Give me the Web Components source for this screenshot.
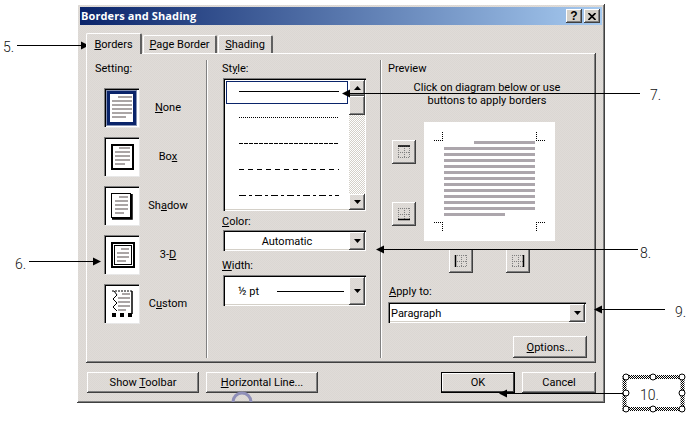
<!DOCTYPE html>
<html>
<head>
<meta charset="utf-8">
<title>Borders and Shading</title>
<style>
  html, body { margin: 0; height: 100%; background: #fff; overflow: hidden; }
  body { font: 11px/13px Roboto, "Liberation Sans", Arial, sans-serif; color: #000; }
  u { text-underline-offset: 1px; }
</style>
</head>
<body>
<script>
const DITHER = "repeating-conic-gradient(#dbd7d3 0 25%, #e0dcd8 0 50%) 0 0/2px 2px";
const RAISED = "inset -1px -1px 0 #404040, inset 1px 1px 0 #fff, inset -2px -2px 0 #808080";
const SUNKEN = "inset 1px 1px 0 #808080, inset 2px 2px 0 #000, inset -1px -1px 0 #fff, inset -2px -2px 0 #d4d0c8";

class BaseElement extends HTMLElement {
  constructor() {
    super();
    this.attachShadow({ mode: "open" });
  }
  connectedCallback() {
    this.render();
  }
}

class WinDialog extends BaseElement {
  render() {
    this.shadowRoot.innerHTML = `
      <style>
        :host {
          display: block; box-sizing: border-box; width: 528px; height: 399px;
          margin: 4px 0 0 77px; padding: 3px; background: ${DITHER};
          box-shadow: ${RAISED};
        }
        .title {
          display: flex; align-items: center; justify-content: space-between; height: 18px;
          padding: 0 2px 0 1px; background: linear-gradient(90deg, #0a246a, #a6caf0);
          color: #fff; font: bold 11px/13px "Open Sans", sans-serif; letter-spacing: 0.1px;
        }
        .title > span:first-child { margin-top: -2px; }
        .caption-buttons { display: flex; gap: 2px; }
        .tabs { display: flex; align-items: flex-end; height: 21px; margin: 7px 0 0 6px; position: relative; z-index: 1; }
        .footer { display: flex; width: 509px; margin: 9px 0 0 7px; gap: 7px; }
        .spacer { flex: 1; }
      </style>
      <div class="title">
        <span>Borders and Shading</span>
        <span class="caption-buttons"><slot name="caption"></slot></span>
      </div>
      <div class="tabs"><slot name="tab"></slot></div>
      <slot name="panel"></slot>
      <div class="footer">
        <slot name="footer-left"></slot>
        <span class="spacer"></span>
        <slot name="footer-right"></slot>
      </div>
    `;
  }
}

class CaptionButton extends BaseElement {
  render() {
    this.shadowRoot.innerHTML = `
      <style>
        :host {
          display: flex; align-items: center; justify-content: center; width: 16px; height: 14px;
          background: #d4d0c8; box-shadow: ${RAISED}; color: #000; font: bold 12px/14px "Liberation Sans", sans-serif;
          letter-spacing: 0;
        }
      </style>
      <slot></slot>
    `;
  }
}

class WinTab extends BaseElement {
  render() {
    const active = this.hasAttribute("active");
    this.shadowRoot.innerHTML = `
      <style>
        :host {
          display: flex; align-items: center; justify-content: center; box-sizing: border-box;
          width: ${this.getAttribute("width")}px; height: ${active ? 21 : 18}px;
          margin-right: 1px; background: ${DITHER}; border-radius: 2px 2px 0 0;
          ${active ? "margin-bottom: -1px;" : ""}
          border-top: 1px solid #fff; border-left: 1px solid #fff;
          border-right: 2px solid #606060;
        }
      </style>
      <slot></slot>
    `;
  }
}

class TabPanel extends BaseElement {
  render() {
    this.shadowRoot.innerHTML = `
      <style>
        :host {
          display: grid; grid-template-columns: 120px 174px 1fr; box-sizing: border-box;
          width: 510px; height: 310px; margin-left: 6px; background: ${DITHER};
          box-shadow: inset -1px -1px 0 #404040, inset 1px 1px 0 #fff, inset -2px -2px 0 #808080;
        }
      </style>
      <slot></slot>
    `;
  }
}

class PanelColumn extends BaseElement {
  render() {
    const divider = this.hasAttribute("divider");
    this.shadowRoot.innerHTML = `
      <style>
        :host {
          display: block; box-sizing: border-box; margin: 7px 0 6px; padding-top: 2px;
          padding-left: ${this.getAttribute("pad")}px;
          ${divider ? "border-left: 1px solid #808080; box-shadow: inset 1px 0 0 #fff;" : ""}
        }
      </style>
      <slot></slot>
    `;
  }
}

class SettingOption extends BaseElement {
  render() {
    this.shadowRoot.innerHTML = `
      <style>
        :host { display: grid; grid-template-columns: 35px 58px; align-items: center; height: 39px; margin: 0 0 10px 9px; }
        .btn { width: 35px; height: 39px; background: #fff; box-shadow: inset 1px 1px 0 #808080, inset 2px 2px 0 #000, 1px 1px 0 #e8e8e8; }
        .label { text-align: center; }
        svg { display: block; }
      </style>
      <div class="btn"><slot name="icon"></slot></div>
      <div class="label"><slot></slot></div>
    `;
  }
}

class ScrollButton extends BaseElement {
  render() {
    const dir = this.getAttribute("dir") || "down";
    const tri = dir === "up" ? "0,4 7,4 3.5,0" : "0,0 7,0 3.5,4";
    this.shadowRoot.innerHTML = `
      <style>
        :host {
          display: flex; align-items: center; justify-content: center; box-sizing: border-box;
          width: ${this.getAttribute("width") || 16}px; height: ${this.getAttribute("height") || 16}px;
          background: ${DITHER}; box-shadow: ${RAISED};
        }
      </style>
      ${this.hasAttribute("blank") ? "" : `<svg width="7" height="4"><polygon points="${tri}" fill="#000"/></svg>`}
    `;
  }
}

class StyleList extends BaseElement {
  render() {
    const lines = [
      [92, "none"],
      [118, "1 1"],
      [144, "4 1"],
      [170, "5 4"],
      [196, "7 3 3 3"]
    ];
    const svgLines = lines
      .map(([y, dash]) => `<line x1="16" x2="116" y1="${y - 78 - 0.5}" y2="${y - 78 - 0.5}" stroke="#000" stroke-dasharray="${dash}"/>`)
      .join("");
    this.shadowRoot.innerHTML = `
      <style>
        :host {
          display: flex; box-sizing: border-box; width: 143px; height: 133px; padding: 2px 1px 1px 2px;
          background: #fff; box-shadow: ${SUNKEN}; position: relative;
        }
        .items { width: 124px; position: relative; }
        .sel { position: absolute; left: 1px; top: 1px; width: 120px; height: 21px; border: 1px solid #0a246a; }
        svg { position: absolute; left: -2px; top: -2px; }
        .bar { width: 16px; display: flex; flex-direction: column; margin-left: 0;
               background: repeating-conic-gradient(#fff 0 25%, #d4d0c8 0 50%) 0 0/2px 2px; }
        .fill { flex: 1; }
      </style>
      <div class="items">
        <div class="sel"></div>
        <svg width="126" height="133">${svgLines}</svg>
      </div>
      <div class="bar">
        <scroll-button dir="up"></scroll-button>
        <scroll-button blank height="19"></scroll-button>
        <div class="fill"></div>
        <scroll-button dir="down"></scroll-button>
      </div>
    `;
  }
}

class ComboBox extends BaseElement {
  render() {
    const w = this.getAttribute("width") || 143;
    const h = this.getAttribute("height") || 21;
    this.shadowRoot.innerHTML = `
      <style>
        :host {
          display: flex; box-sizing: border-box; width: ${w}px; height: ${h}px; padding: 2px 1px 1px 2px;
          background: #fff; box-shadow: ${SUNKEN};
        }
        .value { flex: 1; display: flex; align-items: center; min-width: 0; }
        scroll-button { height: auto; }
      </style>
      <div class="value"><slot></slot></div>
      <scroll-button dir="down" height="${h - 3}" width="16"></scroll-button>
    `;
  }
}

class PushButton extends BaseElement {
  render() {
    const isDefault = this.hasAttribute("default");
    this.shadowRoot.innerHTML = `
      <style>
        :host {
          display: flex; align-items: center; justify-content: center; box-sizing: border-box;
          width: ${this.getAttribute("width") || 74}px; height: ${this.getAttribute("height") || 21}px;
          background: ${DITHER};
          ${isDefault
            ? "outline: 1px solid #000; outline-offset: -1px; box-shadow: inset -2px -2px 0 #404040, inset 2px 2px 0 #fff;"
            : `box-shadow: ${RAISED};`}
        }
      </style>
      <slot></slot>
    `;
  }
}

class BorderToggle extends BaseElement {
  render() {
    const side = this.getAttribute("side");
    const solid = {
      top: [6, 6, 18, 6],
      bottom: [6, 17.5, 18, 17.5],
      left: [6.5, 6, 6.5, 18],
      right: [17.5, 6, 17.5, 18]
    }[side];
    this.shadowRoot.innerHTML = `
      <style>
        :host {
          display: block; width: 24px; height: 24px; background: ${DITHER};
          box-shadow: inset -1px -1px 0 #404040, inset 1px 1px 0 #fff, inset -2px -2px 0 #808080;
        }
        svg { display: block; }
      </style>
      <svg width="24" height="24">
        <path d="M6 6.5H18M6 12.5H18M6 17.5H18M6.5 6V18M12.5 6V18M17.5 6V18" stroke="#808080" stroke-dasharray="1 1" fill="none"/>
        <line x1="${solid[0]}" y1="${solid[1]}" x2="${solid[2]}" y2="${solid[3]}" stroke="#000" stroke-width="1.5"/>
      </svg>
    `;
  }
}

class PreviewPage extends BaseElement {
  render() {
    let rows = `<rect x="50" y="19" width="61" height="3"/>`;
    for (let i = 1; i <= 12; i++) {
      rows += `<rect x="20" y="${19 + i * 6}" width="${i === 12 ? 61 : 91}" height="3"/>`;
    }
    this.shadowRoot.innerHTML = `
      <style>
        :host { display: block; width: 131px; height: 119px; background: #fff; }
        svg { display: block; }
      </style>
      <svg width="131" height="119">
        <g fill="#aca6ac">${rows}</g>
        <path d="M10 18.5H19M18.5 10V19M112 18.5H121M112.5 10V19M10 100.5H19M18.5 100V109M112 100.5H121M112.5 100V109"
              fill="none" stroke="#000" stroke-dasharray="1 1"/>
      </svg>
    `;
  }
}

class PreviewArea extends BaseElement {
  render() {
    this.shadowRoot.innerHTML = `
      <style>
        :host { display: block; margin-left: 4px; }
        .top { display: grid; grid-template-columns: 24px 131px; column-gap: 8px; }
        .side { display: flex; flex-direction: column; gap: 38px; padding-top: 18px; }
        .under { display: flex; gap: 33px; margin: 8px 0 0 57px; }
      </style>
      <div class="top">
        <div class="side"><border-toggle side="top"></border-toggle><border-toggle side="bottom"></border-toggle></div>
        <preview-page></preview-page>
      </div>
      <div class="under"><border-toggle side="left"></border-toggle><border-toggle side="right"></border-toggle></div>
    `;
  }
}

class FieldLabel extends BaseElement {
  render() {
    this.shadowRoot.innerHTML = `
      <style>
        :host {
          display: block; height: 13px;
          margin: ${this.getAttribute("top") || 0}px 0 ${this.getAttribute("bottom") || 0}px ${this.getAttribute("left") || 0}px;
        }
      </style>
      <slot></slot>
    `;
  }
}

class CalloutLayer extends BaseElement {
  render() {
    const labels = [
      ["5.", 3, 47, 14], ["6.", 15, 264, 14], ["7.", 650, 95, 14],
      ["8.", 640, 253, 14], ["9.", 675, 312, 14], ["10.", 640, 395, 14]
    ];
    const left = (tip, y) => `<polygon points="${tip},${y} ${tip + 8},${y - 4} ${tip + 8},${y + 4}"/>`;
    const right = (tip, y) => `<polygon points="${tip},${y} ${tip - 8},${y - 4} ${tip - 8},${y + 4}"/>`;
    const handles = [[626, 377], [653, 377], [682, 377], [626, 393], [682, 393], [626, 409], [653, 409], [682, 409]]
      .map(([x, y]) => `<circle cx="${x}" cy="${y}" r="3" fill="#fff" stroke="#000"/>`)
      .join("");
    this.shadowRoot.innerHTML = `
      <style>
        :host { position: absolute; left: 0; top: 0; width: 695px; height: 421px; pointer-events: none; }
        svg { position: absolute; left: 0; top: 0; }
        span { position: absolute; line-height: 16px; color: #111; font-family: Roboto, sans-serif; font-weight: 300; }
      </style>
      <svg width="695" height="421">
        <defs>
          <pattern id="dots" width="2" height="2" patternUnits="userSpaceOnUse">
            <rect width="1" height="1" fill="#000"/><rect x="1" y="1" width="1" height="1" fill="#000"/>
          </pattern>
        </defs>
        <path d="M233 402A9 9 0 0 1 251 402" fill="none" stroke="#8f8fb8" stroke-width="3"/>
        <path d="M17 45.5H82M29 261.5H94M349 93.5H640M384 249.5H638M601 309.5H665M506 393.5H624" stroke="#000" fill="none"/>
        <g fill="#000">
          ${right(89, 45.5)}${right(101, 261.5)}${left(342, 93.5)}${left(376, 249.5)}${left(594, 309.5)}${left(499, 393.5)}
        </g>
        <rect x="624.5" y="377" width="58" height="32" fill="none" stroke="url(#dots)" stroke-width="4"/>
        ${handles}
      </svg>
      ${labels.map(([t, x, y, s]) => `<span style="left:${x}px;top:${y - 8}px;font-size:${s}px">${t}</span>`).join("")}
    `;
  }
}

// icon drawing for the five setting buttons
const docLines = (x1, x2, y, n, first, last) => {
  let s = "";
  for (let i = 0; i < n; i++) {
    const a = i === 0 ? first : x1;
    const b = i === n - 1 ? last : x2;
    s += `<rect x="${a}" y="${y + i * 4}" width="${b - a}" height="2" fill="#aaa5a5"/>`;
  }
  return s;
};
const SETTING_ICONS = {
  none: `<rect x="4.5" y="4.5" width="26" height="31" fill="none" stroke="#0a246a" stroke-width="3"/>
         <rect x="2.5" y="2.5" width="30" height="35" fill="none" stroke="#0a246a" stroke-dasharray="1 1"/>
         ${docLines(8, 28, 8, 6, 14, 22)}`,
  box: `<rect x="8" y="8" width="21" height="24" fill="none" stroke="#000" stroke-width="2"/>
        ${docLines(11, 26, 10, 5, 15, 21)}`,
  shadow: `<rect x="7.5" y="7.5" width="19" height="24" fill="none" stroke="#000"/>
           <path d="M27.5 8V32.5H8" fill="none" stroke="#000" stroke-width="2.5"/>
           ${docLines(11, 24, 10, 5, 15, 20)}`,
  threeD: `<rect x="8" y="8" width="22" height="24" fill="none" stroke="#000" stroke-width="2"/>
           <rect x="10.5" y="10.5" width="17" height="19" fill="none" stroke="#000"/>
           ${docLines(13, 25, 13, 4, 17, 22)}`,
  custom: `<path d="M8 7H28" stroke="#000" stroke-dasharray="2 1" fill="none"/>
           <path d="M10 7L13 11L9 15L13 19L9 23L13 27" stroke="#000" fill="none"/>
           <path d="M28 7V30" stroke="#000" stroke-width="1.5" fill="none"/>
           ${docLines(14, 26, 9, 5, 18, 22)}
           <rect x="8" y="29" width="4" height="4"/><rect x="16" y="29" width="4" height="4"/><rect x="24" y="29" width="4" height="4"/>`
};
class SettingIcon extends BaseElement {
  render() {
    this.shadowRoot.innerHTML = `
      <style>:host { display: block; } svg { display: block; }</style>
      <svg width="35" height="39">${SETTING_ICONS[this.getAttribute("kind")]}</svg>
    `;
  }
}

[
  ["win-dialog", WinDialog], ["caption-button", CaptionButton], ["win-tab", WinTab],
  ["tab-panel", TabPanel], ["panel-column", PanelColumn], ["setting-option", SettingOption],
  ["setting-icon", SettingIcon], ["scroll-button", ScrollButton], ["style-list", StyleList],
  ["combo-box", ComboBox], ["push-button", PushButton], ["border-toggle", BorderToggle],
  ["preview-page", PreviewPage], ["preview-area", PreviewArea], ["field-label", FieldLabel],
  ["callout-layer", CalloutLayer]
].forEach(([name, cls]) => customElements.define(name, cls));

document.body.insertAdjacentHTML("beforeend", `
<win-dialog>
  <caption-button slot="caption">?</caption-button>
  <caption-button slot="caption"><svg width="8" height="7"><path d="M0.5 0L7.5 7M7.5 0L0.5 7" stroke="#000" stroke-width="1.6"/></svg></caption-button>
  <win-tab slot="tab" active width="56"><span><u>B</u>orders</span></win-tab>
  <win-tab slot="tab" width="74"><span><u>P</u>age Border</span></win-tab>
  <win-tab slot="tab" width="55"><span><u>S</u>hading</span></win-tab>
  <tab-panel slot="panel">
    <panel-column pad="9">
      <field-label bottom="13">Setting:</field-label>
      <setting-option style="margin-left:9px"><setting-icon slot="icon" kind="none"></setting-icon><span><u>N</u>one</span></setting-option>
      <setting-option style="margin-left:9px"><setting-icon slot="icon" kind="box"></setting-icon><span>Bo<u>x</u></span></setting-option>
      <setting-option style="margin-left:9px"><setting-icon slot="icon" kind="shadow"></setting-icon><span>Sh<u>a</u>dow</span></setting-option>
      <setting-option style="margin-left:9px"><setting-icon slot="icon" kind="threeD"></setting-icon><span>3-<u>D</u></span></setting-option>
      <setting-option style="margin-left:9px"><setting-icon slot="icon" kind="custom"></setting-icon><span>C<u>u</u>stom</span></setting-option>
    </panel-column>
    <panel-column divider pad="16">
      <field-label left="-1" bottom="3">St<u>y</u>le:</field-label>
      <style-list></style-list>
      <field-label left="-1" top="4" bottom="2"><u>C</u>olor:</field-label>
      <combo-box><span style="flex:1;text-align:center;padding-right:0">Automatic</span></combo-box>
      <field-label left="-1" top="8" bottom="3"><u>W</u>idth:</field-label>
      <combo-box height="31">
        <span style="margin-left:13px;width:39px;flex:none">½ pt</span>
        <span style="width:67px;height:1px;background:#000;flex:none"></span>
      </combo-box>
    </panel-column>
    <panel-column divider pad="7">
      <field-label>Preview</field-label>
      <div style="width:210px;margin:6px 0 15px -6px;text-align:center">Click on diagram below or use<br>buttons to apply borders</div>
      <preview-area></preview-area>
      <field-label left="1" top="12" bottom="4"><u>A</u>pply to:</field-label>
      <combo-box width="198"><span style="margin-left:1px;flex:1">Paragraph</span></combo-box>
      <push-button width="74" height="22" style="margin:13px 0 0 125px"><span><u>O</u>ptions...</span></push-button>
    </panel-column>
  </tab-panel>
  <push-button slot="footer-left" width="112"><span>Show <u>T</u>oolbar</span></push-button>
  <push-button slot="footer-left" width="112"><span><u>H</u>orizontal Line...</span></push-button>
  <push-button slot="footer-right" default>OK</push-button>
  <push-button slot="footer-right">Cancel</push-button>
</win-dialog>
<callout-layer></callout-layer>
`);
</script>
</body>
</html>
